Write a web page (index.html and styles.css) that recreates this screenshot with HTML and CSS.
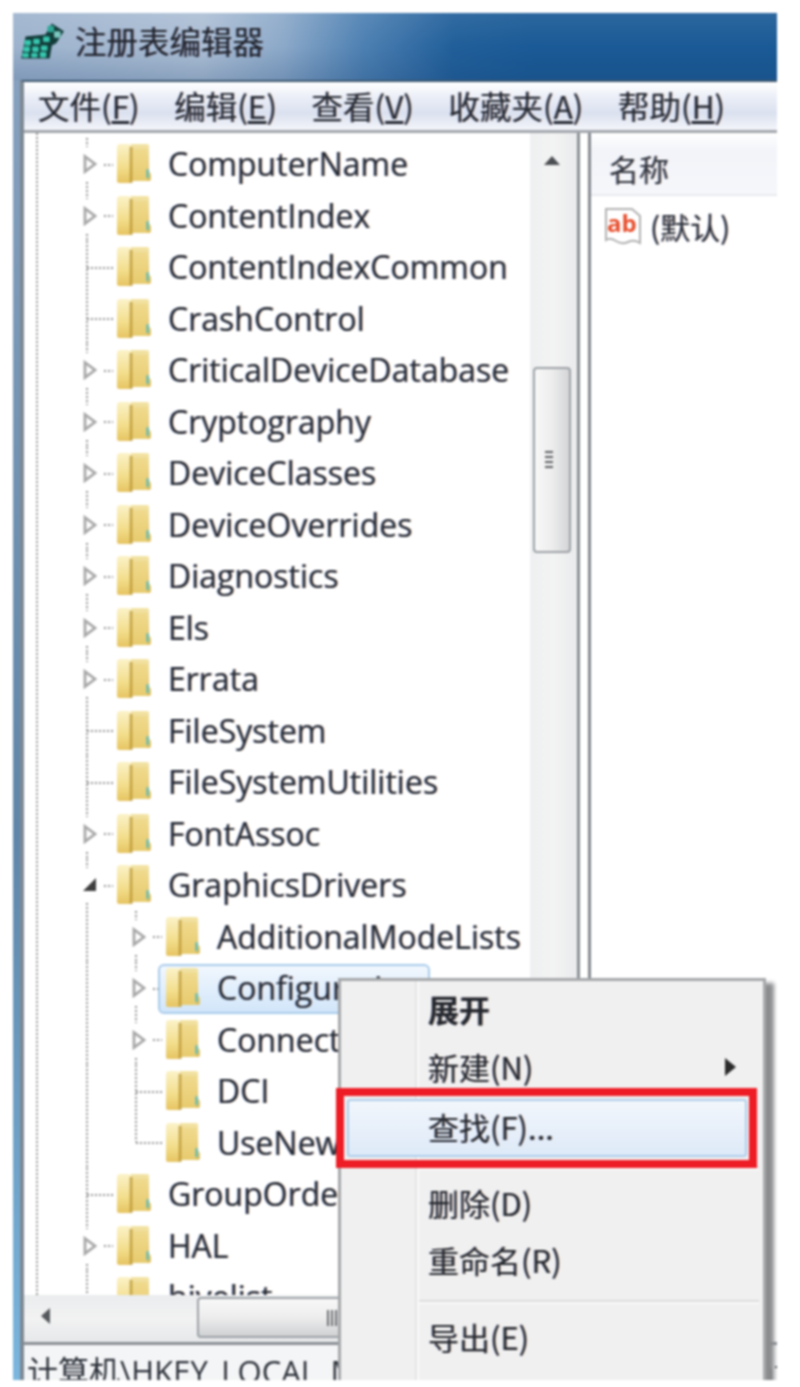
FILE: index.html
```html
<!DOCTYPE html>
<html lang="zh-CN">
<head>
<meta charset="utf-8">
<title>注册表编辑器</title>
<link rel="stylesheet" href="styles.css">
</head>
<body>
<svg class="defs" width="0" height="0" aria-hidden="true">
  <defs>
    <linearGradient id="fback" x1="0" y1="0" x2="0" y2="1"><stop offset="0" stop-color="#f3e4a6"/><stop offset="1" stop-color="#e0bf5c"/></linearGradient>
    <linearGradient id="ffront" x1="0" y1="0" x2="0" y2="1"><stop offset="0" stop-color="#fbf2c8"/><stop offset=".6" stop-color="#f3de8c"/><stop offset="1" stop-color="#e6c462"/></linearGradient>
    <symbol id="folder" viewBox="0 0 36 42">
      <path d="M15 1h17q2 0 2 2v26l2 3v5q0 2-2 2H14z" fill="url(#fback)"/>
      <path d="M15 3 L15 41 L3 41 Q1 41 1 39 V5 Q1 1 4 1 L12 1 Q15 1 15 3z" fill="url(#ffront)"/>
      <rect x="14" y="4" width="3" height="37" fill="#bd9a38" opacity=".8"/>
      <rect x="17" y="6" width="15" height="33" fill="#efd680" opacity=".55"/>
      <path d="M31 27h3v9h-3z" fill="#78bda8"/>
    </symbol>
    <symbol id="tw-open" viewBox="0 0 14 20"><path d="M2 2.5 L12 10 L2 17.5 Z" fill="#fff" stroke="#a8a8a8" stroke-width="2.8"/></symbol>
  </defs>
</svg>
<main class="window">
  <header class="titlebar">
    <svg class="regicon" viewBox="0 2 42 36" aria-hidden="true">
      <path d="M2 36 L6 16 L24 14 L30 4 L41 11 L34 22 L30 24 L28 36 Z" fill="#123c3a"/>
      <g fill="#37c6ae">
        <rect x="5" y="19" width="6" height="5" rx="1"/><rect x="13" y="18" width="6" height="5" rx="1"/>
        <rect x="4" y="25" width="6" height="5" rx="1"/><rect x="12" y="25" width="6" height="5" rx="1"/><rect x="20" y="24" width="6" height="5" rx="1"/>
        <rect x="3" y="31" width="6" height="4" rx="1"/><rect x="11" y="31" width="6" height="4" rx="1"/><rect x="19" y="30" width="6" height="5" rx="1"/>
        <rect x="22" y="16" width="6" height="5" rx="1"/>
      </g>
      <rect x="26" y="6" width="6" height="6" rx="1" fill="#2fa896"/>
      <rect x="32" y="11" width="6" height="6" rx="1" fill="#7cc8c0"/>
    </svg>
    <span class="title-text">注册表编辑器</span>
  </header>
  <div class="client">
    <nav class="menubar">
      <span>文件(<u>F</u>)</span>
      <span>编辑(<u>E</u>)</span>
      <span>查看(<u>V</u>)</span>
      <span>收藏夹(<u>A</u>)</span>
      <span>帮助(<u>H</u>)</span>
    </nav>
    <div class="panes">
      <section class="treepane">
        <div class="treewrap">
          <div class="tree">
            <div class="row"><span class="conn kid"><svg class="tw"><use href="#tw-open"/></svg></span><svg class="folder"><use href="#folder"/></svg><span>ComputerName</span></div>
            <div class="row"><span class="conn kid"><svg class="tw"><use href="#tw-open"/></svg></span><svg class="folder"><use href="#folder"/></svg><span>ContentIndex</span></div>
            <div class="row"><span class="conn"></span><svg class="folder"><use href="#folder"/></svg><span>ContentIndexCommon</span></div>
            <div class="row"><span class="conn"></span><svg class="folder"><use href="#folder"/></svg><span>CrashControl</span></div>
            <div class="row"><span class="conn kid"><svg class="tw"><use href="#tw-open"/></svg></span><svg class="folder"><use href="#folder"/></svg><span>CriticalDeviceDatabase</span></div>
            <div class="row"><span class="conn kid"><svg class="tw"><use href="#tw-open"/></svg></span><svg class="folder"><use href="#folder"/></svg><span>Cryptography</span></div>
            <div class="row"><span class="conn kid"><svg class="tw"><use href="#tw-open"/></svg></span><svg class="folder"><use href="#folder"/></svg><span>DeviceClasses</span></div>
            <div class="row"><span class="conn kid"><svg class="tw"><use href="#tw-open"/></svg></span><svg class="folder"><use href="#folder"/></svg><span>DeviceOverrides</span></div>
            <div class="row"><span class="conn kid"><svg class="tw"><use href="#tw-open"/></svg></span><svg class="folder"><use href="#folder"/></svg><span>Diagnostics</span></div>
            <div class="row"><span class="conn kid"><svg class="tw"><use href="#tw-open"/></svg></span><svg class="folder"><use href="#folder"/></svg><span>Els</span></div>
            <div class="row"><span class="conn kid"><svg class="tw"><use href="#tw-open"/></svg></span><svg class="folder"><use href="#folder"/></svg><span>Errata</span></div>
            <div class="row"><span class="conn"></span><svg class="folder"><use href="#folder"/></svg><span>FileSystem</span></div>
            <div class="row"><span class="conn"></span><svg class="folder"><use href="#folder"/></svg><span>FileSystemUtilities</span></div>
            <div class="row"><span class="conn kid"><svg class="tw"><use href="#tw-open"/></svg></span><svg class="folder"><use href="#folder"/></svg><span>FontAssoc</span></div>
            <div class="row"><span class="conn kid"><svg class="tw" viewBox="0 0 14 20"><path d="M0 16 L13 3 V16 Z" fill="#3e3e3e"/></svg></span><svg class="folder"><use href="#folder"/></svg><span>GraphicsDrivers</span></div>
            <div class="row sub"><span class="conn kid"><svg class="tw"><use href="#tw-open"/></svg></span><svg class="folder"><use href="#folder"/></svg><span>AdditionalModeLists</span></div>
            <div class="row sub selected"><span class="conn kid"><svg class="tw"><use href="#tw-open"/></svg></span><svg class="folder"><use href="#folder"/></svg><span>Configuration</span></div>
            <div class="row sub"><span class="conn kid"><svg class="tw"><use href="#tw-open"/></svg></span><svg class="folder"><use href="#folder"/></svg><span>Connectivity</span></div>
            <div class="row sub"><span class="conn"></span><svg class="folder"><use href="#folder"/></svg><span>DCI</span></div>
            <div class="row sub"><span class="conn last"></span><svg class="folder"><use href="#folder"/></svg><span>UseNewKey</span></div>
            <div class="row"><span class="conn"></span><svg class="folder"><use href="#folder"/></svg><span>GroupOrderList</span></div>
            <div class="row"><span class="conn kid"><svg class="tw"><use href="#tw-open"/></svg></span><svg class="folder"><use href="#folder"/></svg><span>HAL</span></div>
            <div class="row"><span class="conn"></span><svg class="folder"><use href="#folder"/></svg><span>hivelist</span></div>
          </div>
          <div class="vscroll">
            <span class="arrow-up"></span>
            <span class="vthumb"><i></i></span>
          </div>
        </div>
        <div class="hscroll">
          <span class="arrow-left"></span>
          <span class="hthumb"><i></i></span>
        </div>
      </section>
      <section class="listpane">
        <div class="listhead">名称</div>
        <div class="listrow">
          <svg class="abicon" viewBox="0 0 40 40" aria-hidden="true">
            <path d="M2 3 H28 L36 10 V37 Q30 33 24 36 T12 35 T2 34 Z" fill="#fff" stroke="#b2b2b2" stroke-width="2"/>
            <text class="abtext" x="3" y="26">ab</text>
          </svg>
          <span>(默认)</span>
        </div>
      </section>
    </div>
    <footer class="status">计算机\HKEY_LOCAL_MACHINE\SYSTEM\CurrentControlSet\Control\GraphicsDrivers</footer>
  </div>
  <div class="ctxmenu">
    <div class="item strong">展开</div>
    <div class="item">新建(N)<span class="submark"></span></div>
    <div class="item hot">查找(F)...</div>
    <div class="sep"></div>
    <div class="item">删除(D)</div>
    <div class="item">重命名(R)</div>
    <div class="sep"></div>
    <div class="item">导出(E)</div>
    <div class="item">权限(P)...</div>
    <div class="redbox"></div>
  </div>
</main>
</body>
</html>
```
FILE: styles.css
```css
html, body { margin: 0; padding: 0; background: #fff; }
body { height: 1387px; overflow: hidden; font-family: "Open Sans", "Noto Sans CJK SC", sans-serif; color: #2a2f38; }
.defs { position: absolute; }
.window {
  position: relative; box-sizing: border-box; margin: 13px 0 0 13px; width: 764px; height: 1367px;
  display: flex; flex-direction: column; overflow: hidden; filter: blur(.8px);
  background: linear-gradient(180deg, #8aa3c0 0, #5f86a8 60%, #7ab6de 100%);
}
.titlebar {
  height: 67px; flex: none; display: flex; align-items: center; gap: 10px; padding: 0 0 11px 6px; box-sizing: border-box;
  background:
    linear-gradient(180deg, rgba(255,255,255,.08) 0, rgba(255,255,255,0) 50%, rgba(20,60,110,.22) 100%),
    linear-gradient(90deg, #9db3cd 0, #adbfd5 190px, #8ca9c9 270px, #4d80b2 350px, #215f9a 440px, #1a5a96 520px);
}
.regicon { width: 46px; height: 40px; flex: none; }
.title-text { font: 400 31.5px/1 "Noto Sans CJK SC", sans-serif; color: #20242c; text-shadow: 1px 0 0 rgba(150,80,90,.3), -1px 0 0 rgba(50,90,160,.3); }
.client {
  flex: 1; min-height: 0; margin-left: 7px; display: flex; flex-direction: column;
  border-left: 4px solid #7d8893; border-top: 2px solid #3d5870; background: #fff;
}
.menubar {
  height: 51px; flex: none; box-sizing: border-box; display: flex; align-items: center; gap: 34.5px; padding: 0 0 0 14px;
  font: 400 31.5px/1 "Noto Sans CJK SC", sans-serif; color: #262a32;
  text-shadow: 1px 0 0 rgba(190,120,70,.3), -1px 0 0 rgba(60,100,190,.3);
  border-bottom: 3px solid #a3a7ad;
  background: linear-gradient(180deg, #fff 0, #e9edf6 35%, #dbe1ef 65%, #f3f5fa 100%);
}
.panes { flex: 1; min-height: 0; display: flex; }
.treepane { width: 553px; flex: none; display: flex; flex-direction: column; border-right: 3px solid #8c9096; box-sizing: content-box; }
.treewrap { flex: 1; min-height: 0; display: flex; }
.tree {
  flex: 1; min-width: 0; overflow: hidden; padding-top: 5px; box-sizing: border-box;
  background: linear-gradient(#949494 50%, transparent 50%) 12px 0 / 2px 4px repeat-y;
  font-size: 32px; color: #262b34;
  text-shadow: 1px 0 0 rgba(200,120,60,.35), -1px 0 0 rgba(50,100,200,.35);
}
.row { position: relative; height: 51.5px; display: flex; align-items: center; box-sizing: border-box; padding-left: 59px; white-space: nowrap; }
.row::before { content: ""; display: none; position: absolute; left: 62px; top: 0; bottom: 0; width: 2px; background: linear-gradient(#949494 50%, transparent 50%) 0 0 / 2px 4px repeat-y; z-index: 1; }
.row.sub { padding-left: 108px; }
.row.sub::before { display: block; }
.conn { position: relative; width: 33px; height: 100%; flex: none; display: block; }
.conn::before { content: ""; position: absolute; left: 3px; top: 0; bottom: 0; width: 2px; background: linear-gradient(#949494 50%, transparent 50%) 0 0 / 2px 4px repeat-y; }
.conn::after { content: ""; position: absolute; left: 4px; right: 3px; top: 50%; height: 2px; background: linear-gradient(90deg, #949494 50%, transparent 50%) 0 0 / 4px 2px repeat-x; }
.conn.kid::after { left: 21px; }
.conn.last::before { bottom: 50%; }
.tw { position: absolute; left: 0; top: 9px; width: 14px; height: 34px; padding: 7px 0; box-sizing: border-box; background: #fff; z-index: 1; }
.folder { width: 35px; height: 41px; flex: none; margin-right: 17px; position: relative; z-index: 1; }
.row > span:last-child { position: relative; z-index: 1; }
.row.selected::after {
  content: ""; position: absolute; left: 134px; top: 2px; width: 272px; height: 50px; box-sizing: border-box;
  border: 2px solid #a9cbea; border-radius: 6px; background: linear-gradient(180deg, #f1f7fe, #d2e6fa);
}
.vscroll { position: relative; width: 47px; flex: none; background: linear-gradient(90deg, #eef0f1, #f3f3f3 50%, #e9ebec); }
.arrow-up { position: absolute; left: 14px; top: 23px; width: 0; height: 0; border: 8px solid transparent; border-top: 0; border-bottom: 9px solid #4c4f53; }
.vthumb {
  position: absolute; left: 3px; top: 234px; width: 38px; height: 186px; box-sizing: border-box;
  border: 2px solid #9da1a6; border-radius: 4px; background: linear-gradient(90deg, #f8f8f8, #ededed 50%, #d4d5d7);
}
.vthumb i { position: absolute; left: 10px; top: 82px; width: 8px; height: 18px; background: repeating-linear-gradient(180deg, #5c5f63 0 2px, transparent 2px 5px); }
.hscroll { position: relative; height: 47px; flex: none; background: linear-gradient(180deg, #eaecee, #f2f2f2 50%, #e6e8ea); }
.arrow-left { position: absolute; left: 17px; top: 13px; width: 0; height: 0; border: 8px solid transparent; border-left: 0; border-right: 9px solid #55585c; }
.hthumb {
  position: absolute; left: 173px; top: 2px; width: 266px; height: 41px; box-sizing: border-box;
  border: 2px solid #9da1a6; border-radius: 4px; background: linear-gradient(180deg, #f8f8f8, #ededed 50%, #cfd1d3);
}
.hthumb i { position: absolute; left: 128px; top: 11px; width: 10px; height: 16px; background: repeating-linear-gradient(90deg, #6c6f73 0 2px, transparent 2px 4px); }
.listpane { flex: 1; min-width: 0; margin-left: 8px; border-left: 3px solid #858a90; background: #fff; }
.listhead {
  height: 63px; box-sizing: border-box; padding: 16px 0 0 18px; border-bottom: 2px solid #e8eaee;
  font: 400 30px/1.3 "Noto Sans CJK SC", sans-serif; color: #30343c;
  text-shadow: 1px 0 0 rgba(190,120,70,.3), -1px 0 0 rgba(60,100,190,.3);
  background: linear-gradient(180deg, #fff 0, #f2f4f9 30%, #f6f7fb 100%);
}
.listrow { display: flex; align-items: center; gap: 6px; padding: 9px 0 0 13px; font: 400 30px/42px "Noto Sans CJK SC", sans-serif; color: #2a2f38; text-shadow: 1px 0 0 rgba(190,120,70,.3), -1px 0 0 rgba(60,100,190,.3); }
.abicon { width: 40px; height: 40px; flex: none; }
.abtext { font: 700 24px "Open Sans", sans-serif; fill: #e8502f; text-shadow: none; }
.status {
  height: 38px; flex: none; box-sizing: border-box; overflow: hidden; white-space: nowrap; padding: 6px 0 0 3px;
  border-top: 3px solid #8a8f95; font-size: 31px; line-height: 40px; background: #f4f5f6; font-family: "Open Sans", "Noto Sans CJK SC", sans-serif;
}
.ctxmenu {
  position: absolute; z-index: 5; left: 325px; top: 965px; width: 428px; height: 470px; box-sizing: border-box; padding-top: 1px;
  border: 3px solid #a6a8aa; background: #f0f0f0; box-shadow: 8px 5px 4px #8b8c8e;
  font: 400 31px/1 "Noto Sans CJK SC", sans-serif; color: #24272d;
  text-shadow: 1px 0 0 rgba(190,120,70,.3), -1px 0 0 rgba(60,100,190,.3);
}
.ctxmenu::before { content: ""; position: absolute; left: 74px; top: 0; bottom: 0; width: 2px; background: #e4e4e4; border-right: 2px solid #fafafa; }
.item { position: relative; height: 57.5px; display: flex; align-items: center; box-sizing: border-box; padding: 0 0 4px 87px; }
.item.strong { font-weight: 700; }
.item.hot {
  margin: 2px 16px 0 6px; padding: 0 0 2px 79px; border: 2px solid #aecdeb; border-radius: 3px;
  background: linear-gradient(180deg, #f2f6fc, #deeaf8);
}
.submark { position: absolute; left: 384px; top: 18px; width: 0; height: 0; border: 9px solid transparent; border-right: 0; border-left: 11px solid #2b2b2b; }
.sep { height: 19px; margin-left: 78px; position: relative; }
.sep::after { content: ""; position: absolute; left: 0; right: 4px; top: 9px; height: 2px; background: #dcdcdc; border-bottom: 2px solid #fafafa; }
.redbox { position: absolute; left: -5px; top: 107px; width: 421px; height: 80px; box-sizing: border-box; border: 8px solid #ee1c25; }
```
